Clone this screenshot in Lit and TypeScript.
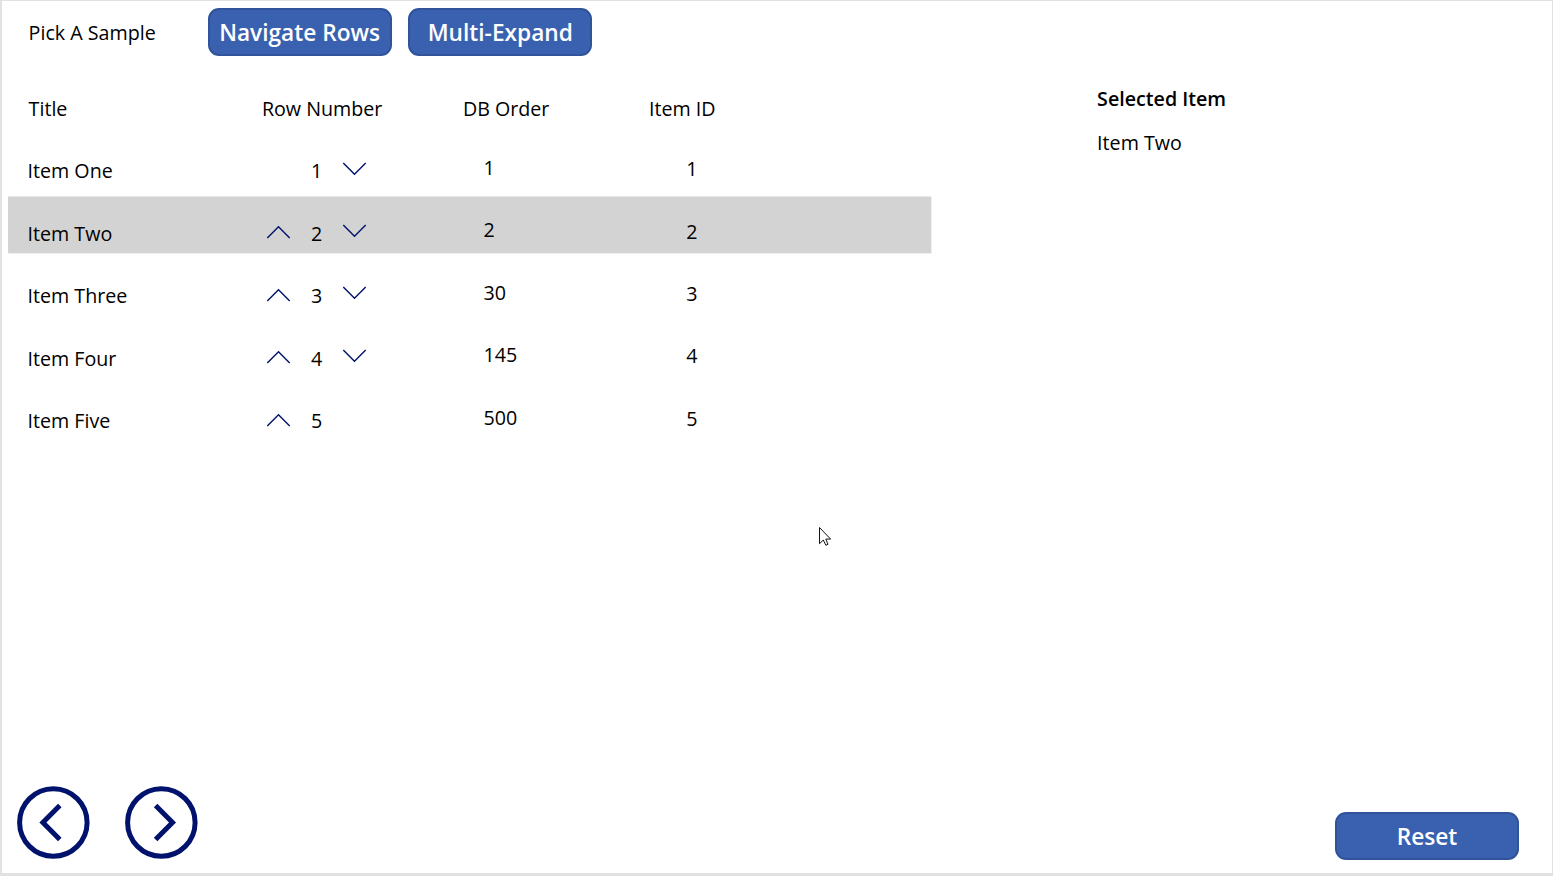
import { LitElement, html, css, svg, nothing } from "lit";
import { customElement, state } from "lit/decorators.js";

interface Item {
  title: string;
  row: number;
  order: number;
  id: number;
}

const ITEMS: Item[] = [
  { title: "Item One", row: 1, order: 1, id: 1 },
  { title: "Item Two", row: 2, order: 2, id: 2 },
  { title: "Item Three", row: 3, order: 30, id: 3 },
  { title: "Item Four", row: 4, order: 145, id: 4 },
  { title: "Item Five", row: 5, order: 500, id: 5 },
];

const chevron = (points: string, cls: string) => html`
  <svg class="chev ${cls}" width="24" height="14" viewBox="0 0 24 14">
    ${svg`<polyline points=${points} fill="none" stroke="#00126b" stroke-width="1.4" />`}
  </svg>`;

const circleArrow = (points: string) => html`
  <svg width="73" height="73" viewBox="0 0 73 73">
    <circle cx="36.35" cy="36.5" r="33.75" fill="none" stroke="#00126b" stroke-width="5" />
    ${svg`<polyline points=${points} fill="none" stroke="#00126b" stroke-width="5" />`}
  </svg>`;

@customElement("app-root")
export class AppRoot extends LitElement {
  @state() private selected = 2;

  static styles = css`
    :host {
      display: block;
      box-sizing: border-box;
      width: 1553px;
      height: 876px;
      border: solid #e1e1e1;
      border-width: 1px 1px 3px 2px;
      background: #fff;
      color: #000;
      font: 19.67px/26px "Open Sans", "Noto Sans", sans-serif;
      overflow: hidden;
      position: relative;
    }
    .page {
      display: flex;
      flex-direction: column;
      height: 100%;
    }
    .top {
      display: flex;
      padding: 7.3px 0 0 26.6px;
      height: 47.7px;
    }
    .pick {
      width: 179px;
      padding-top: 12px;
    }
    .btn {
      box-sizing: border-box;
      width: 184px;
      height: 47.5px;
      margin: 0 17px 0 0;
      padding: 1px 0 0;
      border: 2px solid #30539a;
      border-radius: 11px;
      background: #3a61b0;
      color: #fff;
      font: 600 22.7px/30px "Open Sans", "Noto Sans", sans-serif;
      white-space: nowrap;
    }
    .top .btn {
      margin-right: 16.7px;
    }
    .main {
      display: flex;
      flex: 1;
    }
    .list {
      width: 923.3px;
      margin-left: 6px;
    }
    .head,
    .row {
      display: grid;
      grid-template-columns: 252px 201px 186px 1fr;
    }
    .head {
      padding-top: 40px;
      height: 37.85px;
    }
    .head span {
      padding-left: 1.9px;
    }
    .head .title {
      padding-left: 20.6px;
    }
    .row {
      height: 57px;
      margin-top: 5.47px;
    }
    .head + .row {
      margin-top: 0;
    }
    .row.selected {
      background: #d3d3d3;
      box-shadow: inset 0 1px #e6e6e6, 1px 1px #efefef;
    }
    .row .title {
      padding: 24.35px 0 0 19.5px;
    }
    .nav {
      display: grid;
      grid-template-columns: 44.5px 32px 1fr;
      padding-left: 6.5px;
    }
    .num {
      padding-top: 24.35px;
      grid-column: 2;
      grid-row: 1;
    }
    .up {
      margin-top: 29px;
      grid-column: 1;
    }
    .down {
      grid-column: 3;
      margin-top: 27.7px;
    }
    .chev {
      display: block;
      grid-row: 1;
    }
    .order {
      padding: 21.1px 0 0 22.6px;
    }
    .id {
      padding: 22.22px 0 0 39.3px;
    }
    .side {
      margin-left: 165.8px;
      padding-top: 30px;
    }
    .side h2 {
      margin: 0 0 18px;
      font: 600 19.67px/26px "Open Sans", "Noto Sans", sans-serif;
    }
    .foot {
      display: flex;
      justify-content: space-between;
      padding: 0 16px 13px 15px;
      height: 74px;
    }
    .arrows {
      display: flex;
      gap: 34.7px;
    }
    .foot .btn {
      margin-top: 26.4px;
    }
    .cursor {
      position: absolute;
      left: 817px;
      top: 526px;
    }
  `;

  render() {
    return html`
      <div class="page">
        <header class="top">
          <div class="pick">Pick A Sample</div>
          <button class="btn">Navigate Rows</button>
          <button class="btn">Multi-Expand</button>
        </header>
        <div class="main">
          <section class="list">
            <div class="head">
              <span class="title">Title</span>
              <span>Row Number</span>
              <span>DB Order</span>
              <span>Item ID</span>
            </div>
            ${ITEMS.map(
              (it) => html`
                <div class="row ${it.row === this.selected ? "selected" : ""}" @click=${() => (this.selected = it.row)}>
                  <span class="title">${it.title}</span>
                  <div class="nav">
                    ${it.row > 1 ? chevron("0.3,13 11.5,1.8 22.7,13", "up") : nothing}
                    <span class="num">${it.row}</span>
                    ${it.row < ITEMS.length ? chevron("0.3,1 11.5,12.2 22.7,1", "down") : nothing}
                  </div>
                  <span class="order">${it.order}</span>
                  <span class="id">${it.id}</span>
                </div>
              `
            )}
          </section>
          <aside class="side">
            <h2>Selected Item</h2>
            <div>${ITEMS[this.selected - 1].title}</div>
          </aside>
        </div>
        <footer class="foot">
          <div class="arrows">
            ${circleArrow("42.8,19.6 25.9,36.5 42.8,53.4")}
            ${circleArrow("30.6,19.6 47.5,36.5 30.6,53.4")}
          </div>
          <button class="btn">Reset</button>
        </footer>
      </div>
      <svg class="cursor" width="13" height="20" viewBox="0 0 13 20">
        <path d="M0.5 0.5 V16.7 L4.3 13.1 L6.9 18.3 L9 17.3 L6.8 12.1 H11.6 Z" fill="#fff" stroke="#111118" stroke-width="1" />
      </svg>
    `;
  }
}
